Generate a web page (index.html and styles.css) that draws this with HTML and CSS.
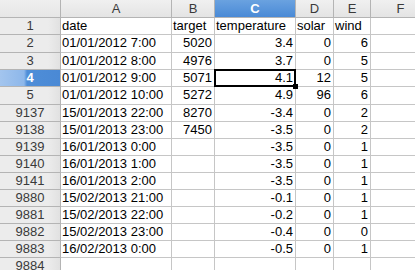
FILE: index.html
```html
<!DOCTYPE html>
<html>
<head>
<meta charset="utf-8">
<link rel="stylesheet" href="styles.css">
</head>
<body>
<div class="sheet">
  <div class="corner"></div>
  <div class="ch">A</div><div class="ch">B</div><div class="ch sel">C</div><div class="ch">D</div><div class="ch">E</div><div class="ch">F</div>

  <div class="rh">1</div><div class="c">date</div><div class="c">target</div><div class="c">temperature</div><div class="c">solar</div><div class="c">wind</div><div class="c"></div>
  <div class="rh">2</div><div class="c">01/01/2012 7:00</div><div class="c n">5020</div><div class="c n">3.4</div><div class="c n">0</div><div class="c n">6</div><div class="c"></div>
  <div class="rh">3</div><div class="c">01/01/2012 8:00</div><div class="c n">4976</div><div class="c n">3.7</div><div class="c n">0</div><div class="c n">5</div><div class="c"></div>
  <div class="rh sel">4</div><div class="c">01/01/2012 9:00</div><div class="c n">5071</div><div class="c n active">4.1<span class="handle"></span></div><div class="c n">12</div><div class="c n">5</div><div class="c"></div>
  <div class="rh">5</div><div class="c">01/01/2012 10:00</div><div class="c n">5272</div><div class="c n">4.9</div><div class="c n">96</div><div class="c n">6</div><div class="c"></div>
  <div class="rh">9137</div><div class="c">15/01/2013 22:00</div><div class="c n">8270</div><div class="c n">-3.4</div><div class="c n">0</div><div class="c n">2</div><div class="c"></div>
  <div class="rh">9138</div><div class="c">15/01/2013 23:00</div><div class="c n">7450</div><div class="c n">-3.5</div><div class="c n">0</div><div class="c n">2</div><div class="c"></div>
  <div class="rh">9139</div><div class="c">16/01/2013 0:00</div><div class="c n"></div><div class="c n">-3.5</div><div class="c n">0</div><div class="c n">1</div><div class="c"></div>
  <div class="rh">9140</div><div class="c">16/01/2013 1:00</div><div class="c n"></div><div class="c n">-3.5</div><div class="c n">0</div><div class="c n">1</div><div class="c"></div>
  <div class="rh">9141</div><div class="c">16/01/2013 2:00</div><div class="c n"></div><div class="c n">-3.5</div><div class="c n">0</div><div class="c n">1</div><div class="c"></div>
  <div class="rh">9880</div><div class="c">15/02/2013 21:00</div><div class="c n"></div><div class="c n">-0.1</div><div class="c n">0</div><div class="c n">1</div><div class="c"></div>
  <div class="rh">9881</div><div class="c">15/02/2013 22:00</div><div class="c n"></div><div class="c n">-0.2</div><div class="c n">0</div><div class="c n">1</div><div class="c"></div>
  <div class="rh">9882</div><div class="c">15/02/2013 23:00</div><div class="c n"></div><div class="c n">-0.4</div><div class="c n">0</div><div class="c n">0</div><div class="c"></div>
  <div class="rh">9883</div><div class="c">16/02/2013 0:00</div><div class="c n"></div><div class="c n">-0.5</div><div class="c n">0</div><div class="c n">1</div><div class="c"></div>
  <div class="rh">9884</div><div class="c"></div><div class="c"></div><div class="c"></div><div class="c"></div><div class="c"></div><div class="c"></div>
</div>
</body>
</html>
```
FILE: styles.css
```css
html, body {
  margin: 0;
  padding: 0;
  background: #ffffff;
  overflow: hidden;
}
.sheet {
  display: grid;
  grid-template-columns: 61px 111px 43px 81px 38px 37px 60px;
  grid-template-rows: 18px 17px 18px 17px 17px 18px 17px 17px 17px 17px 17px 17px 17px 17px 17px 17px;
  font-family: "Liberation Sans", Arial, sans-serif;
  font-size: 13px;
  width: 431px;
  height: 270px;
}
.corner, .ch, .rh, .c {
  box-sizing: border-box;
  border-right: 1px solid #c6c6c6;
  border-bottom: 1px solid #c6c6c6;
  line-height: 16px;
  white-space: nowrap;
  overflow: visible;
}
.corner {
  background: linear-gradient(to bottom, #efefef, #e6e6e6);
  border-color: #b4b4b4;
}
.ch {
  background: linear-gradient(to bottom, #f0f0f0, #e4e4e4);
  border-color: #b4b4b4;
  color: #3a3a3a;
  text-align: center;
  line-height: 17px;
}
.ch.sel {
  background: linear-gradient(to bottom, #6aa2e0, #4a8ad6);
  color: #ffffff;
  font-weight: bold;
}
.rh {
  background: linear-gradient(to right, #ececec 0%, #ececec 80%, #e1e1e1 100%);
  border-color: #b4b4b4;
  color: #3a3a3a;
  text-align: center;
}
.rh.sel {
  background: linear-gradient(to right, #a3c5ee 0%, #8db7ea 40%, #4f8ed8 45%, #4a89d5 100%);
  color: #ffffff;
  font-weight: bold;
}
.c {
  color: #000000;
  padding: 0 2px 0 1px;
}
.c.n {
  text-align: right;
}
.active {
  position: relative;
}
.active::before {
  content: "";
  position: absolute;
  left: -1px;
  top: -1px;
  right: -1px;
  bottom: -1px;
  border: 2px solid #000000;
}
.handle {
  position: absolute;
  right: -3px;
  bottom: -3px;
  width: 5px;
  height: 5px;
  background: #000000;
}
```
